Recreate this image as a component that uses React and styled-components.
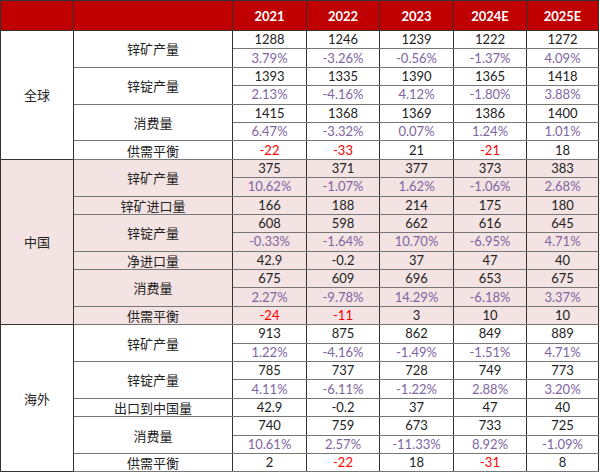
import React from "react";
import styled, { createGlobalStyle } from "styled-components";

const GlobalStyle = createGlobalStyle`
  body {
    margin: 0;
    background: #ffffff;
  }
`;

const Table = styled.table`
  width: 598px;
  table-layout: fixed;
  border-collapse: collapse;
  font-family: Lato, "Noto Sans CJK SC", sans-serif;
  border: 1px solid #222;
`;

const HeadCell = styled.th`
  height: 29px;
  padding: 0;
  background: #c00000;
  color: #ffffff;
  font-size: 13px;
  font-weight: 700;
  text-align: center;
  border: 1px solid #333;
`;

const GroupCell = styled.td`
  padding: 0;
  background: ${(p) => p.$bg};
  color: #222;
  font-family: "Noto Sans CJK SC", sans-serif;
  font-size: 13px;
  text-align: center;
  border: 1px solid #333;
`;

const LabelCell = styled.td`
  padding: 0;
  background: ${(p) => p.$bg};
  color: #222;
  font-family: "Noto Sans CJK SC", sans-serif;
  font-size: 13px;
  text-align: center;
  border-left: 1px solid #333;
  border-right: 1px solid #333;
  border-top: 1px solid #777;
  border-bottom: 1px solid #777;
  line-height: 1;
`;

const ValueCell = styled.td`
  height: 17.4px;
  padding: 0;
  background: ${(p) => p.$bg};
  color: ${(p) => (p.$tone === "pct" ? "#8064a2" : p.$tone === "neg" ? "#ff0000" : "#222")};
  font-size: 13px;
  text-align: center;
  line-height: 1;
  border-left: 1px solid #333;
  border-right: 1px solid #333;
  border-top: 1px solid #777;
  border-bottom: 1px solid #777;
`;

const years = ["2021", "2022", "2023", "2024E", "2025E"];
const widths = [73, 159, 74, 73, 74, 73, 72];

const sections = [
  {
    name: "全球",
    bg: "#ffffff",
    items: [
      { label: "锌矿产量", values: [1288, 1246, 1239, 1222, 1272], pct: ["3.79%", "-3.26%", "-0.56%", "-1.37%", "4.09%"] },
      { label: "锌锭产量", values: [1393, 1335, 1390, 1365, 1418], pct: ["2.13%", "-4.16%", "4.12%", "-1.80%", "3.88%"] },
      { label: "消费量", values: [1415, 1368, 1369, 1386, 1400], pct: ["6.47%", "-3.32%", "0.07%", "1.24%", "1.01%"] },
      { label: "供需平衡", values: [-22, -33, 21, -21, 18], balance: true },
    ],
  },
  {
    name: "中国",
    bg: "#f4e3e3",
    items: [
      { label: "锌矿产量", values: [375, 371, 377, 373, 383], pct: ["10.62%", "-1.07%", "1.62%", "-1.06%", "2.68%"] },
      { label: "锌矿进口量", values: [166, 188, 214, 175, 180] },
      { label: "锌锭产量", values: [608, 598, 662, 616, 645], pct: ["-0.33%", "-1.64%", "10.70%", "-6.95%", "4.71%"] },
      { label: "净进口量", values: ["42.9", "-0.2", 37, 47, 40] },
      { label: "消费量", values: [675, 609, 696, 653, 675], pct: ["2.27%", "-9.78%", "14.29%", "-6.18%", "3.37%"] },
      { label: "供需平衡", values: [-24, -11, 3, 10, 10], balance: true },
    ],
  },
  {
    name: "海外",
    bg: "#ffffff",
    items: [
      { label: "锌矿产量", values: [913, 875, 862, 849, 889], pct: ["1.22%", "-4.16%", "-1.49%", "-1.51%", "4.71%"] },
      { label: "锌锭产量", values: [785, 737, 728, 749, 773], pct: ["4.11%", "-6.11%", "-1.22%", "2.88%", "3.20%"] },
      { label: "出口到中国量", values: ["42.9", "-0.2", 37, 47, 40] },
      { label: "消费量", values: [740, 759, 673, 733, 725], pct: ["10.61%", "2.57%", "-11.33%", "8.92%", "-1.09%"] },
      { label: "供需平衡", values: [2, -22, 18, -31, 8], balance: true },
    ],
  },
];

function rowCount(section) {
  return section.items.reduce((n, it) => n + (it.pct ? 2 : 1), 0);
}

function Section({ section }) {
  const rows = [];
  const span = rowCount(section);
  section.items.forEach((item, i) => {
    const lead = [];
    if (i === 0) {
      lead.push(
        <GroupCell key="g" rowSpan={span} $bg={section.bg}>
          {section.name}
        </GroupCell>
      );
    }
    lead.push(
      <LabelCell key="l" rowSpan={item.pct ? 2 : 1} $bg={section.bg}>
        {item.label}
      </LabelCell>
    );
    rows.push(
      <tr key={item.label + "v"}>
        {lead}
        {item.values.map((v, j) => (
          <ValueCell
            key={j}
            $bg={section.bg}
            $tone={item.balance && Number(v) < 0 ? "neg" : "num"}
          >
            {v}
          </ValueCell>
        ))}
      </tr>
    );
    if (item.pct) {
      rows.push(
        <tr key={item.label + "p"}>
          {item.pct.map((p, j) => (
            <ValueCell key={j} $bg={section.bg} $tone="pct">
              {p}
            </ValueCell>
          ))}
        </tr>
      );
    }
  });
  return rows;
}

export default function App() {
  return (
    <>
      <GlobalStyle />
      <Table>
        <colgroup>
          {widths.map((w, i) => (
            <col key={i} style={{ width: w }} />
          ))}
        </colgroup>
        <thead>
          <tr>
            <HeadCell />
            <HeadCell />
            {years.map((y) => (
              <HeadCell key={y}>{y}</HeadCell>
            ))}
          </tr>
        </thead>
        <tbody>
          {sections.map((s) => (
            <Section key={s.name} section={s} />
          ))}
        </tbody>
      </Table>
    </>
  );
}
